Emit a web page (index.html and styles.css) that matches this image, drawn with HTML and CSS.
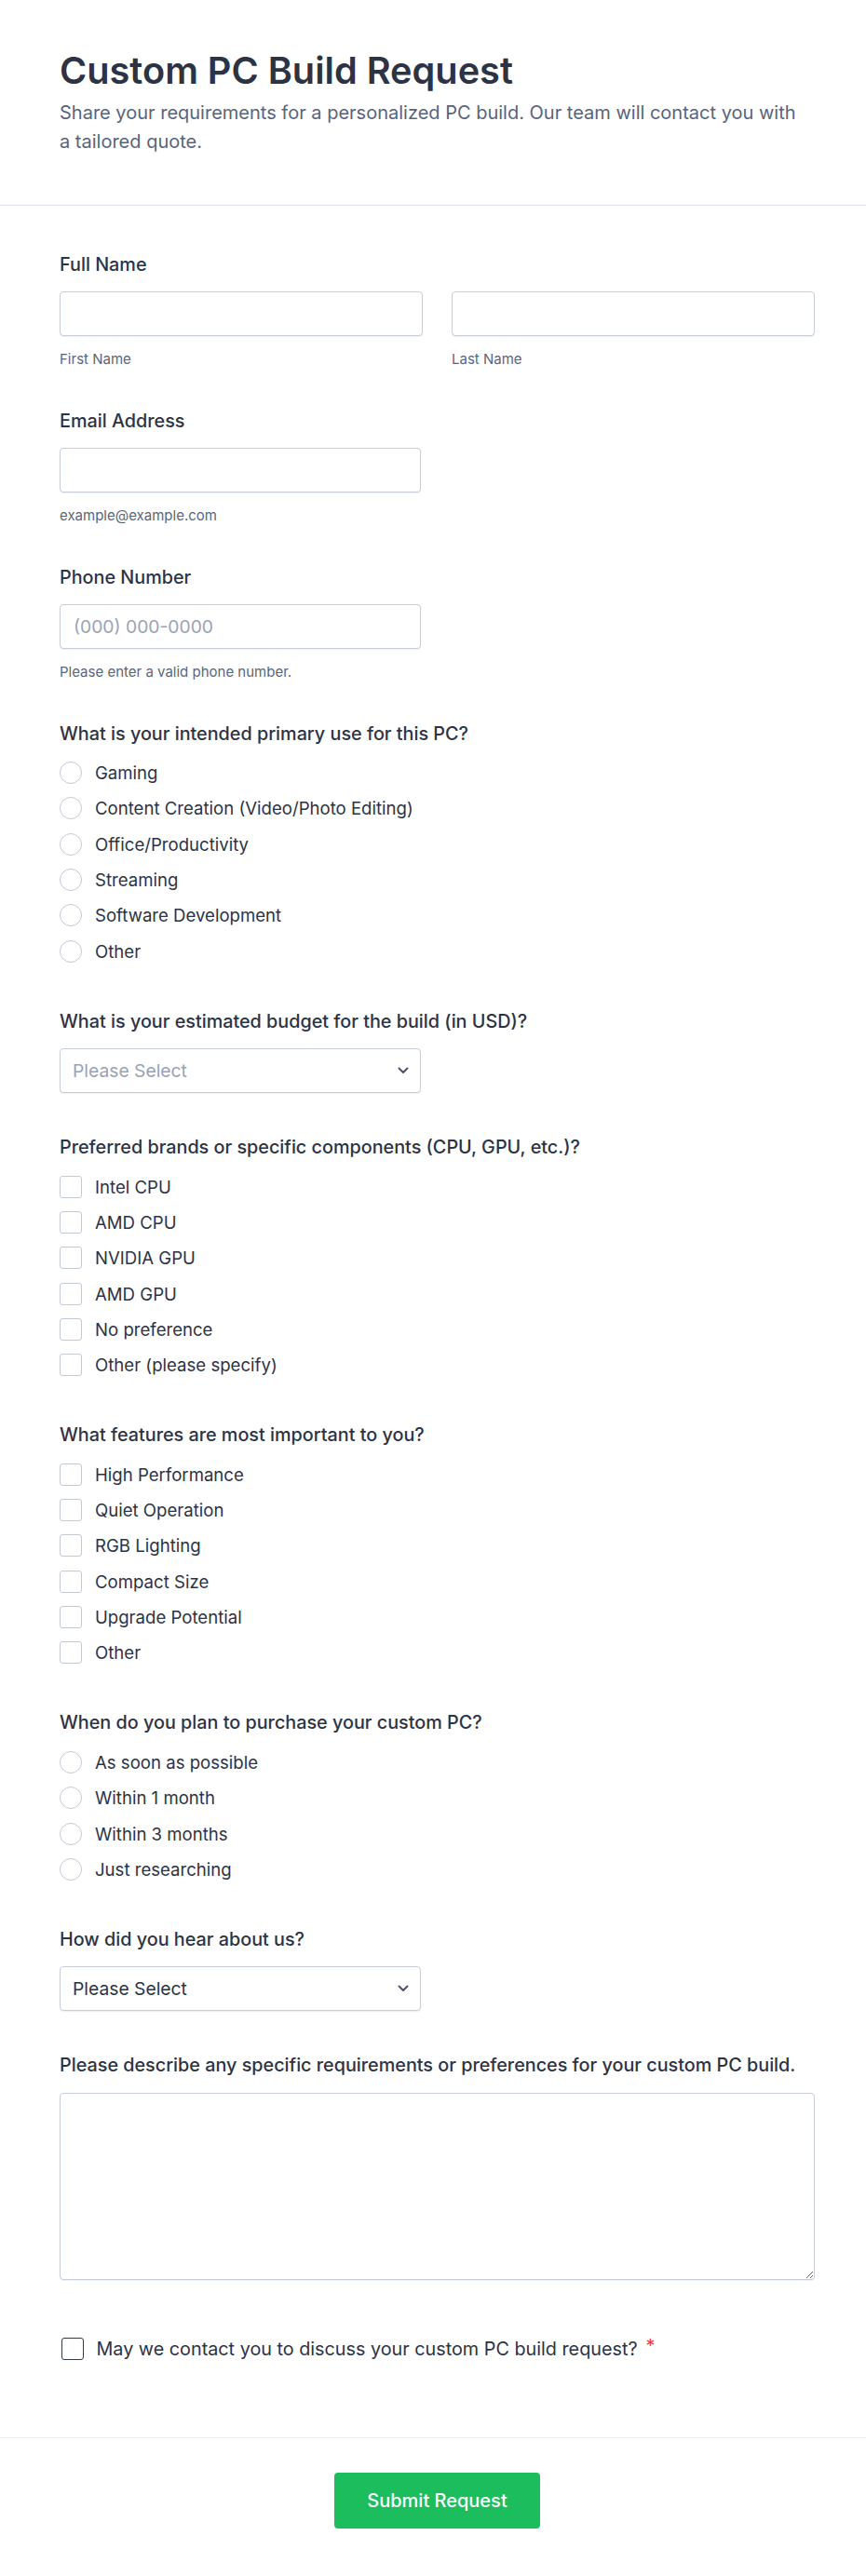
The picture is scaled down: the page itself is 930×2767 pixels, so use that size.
FILE: index.html
```html
<!DOCTYPE html>
<html lang="en">
<head>
<meta charset="utf-8">
<title>Custom PC Build Request</title>
<link rel="stylesheet" href="styles.css">
</head>
<body>
<header class="form-header">
  <h1 class="title">Custom PC Build Request</h1>
  <p class="subtitle">Share your requirements for a personalized PC build. Our team will contact you with a tailored quote.</p>
</header>

<main class="form-body">
  <div class="field">
    <div class="label">Full Name</div>
    <div class="name-row">
      <div class="name-col">
        <input class="text-input" type="text">
        <div class="helper">First Name</div>
      </div>
      <div class="name-col">
        <input class="text-input" type="text">
        <div class="helper">Last Name</div>
      </div>
    </div>
  </div>

  <div class="field">
    <div class="label">Email Address</div>
    <input class="text-input single" type="email">
    <div class="helper">example@example.com</div>
  </div>

  <div class="field">
    <div class="label">Phone Number</div>
    <input class="text-input single" type="tel" placeholder="(000) 000-0000">
    <div class="helper">Please enter a valid phone number.</div>
  </div>

  <div class="field">
    <div class="label">What is your intended primary use for this PC?</div>
    <div class="options">
      <label class="option"><input class="radio" type="radio" name="use"><span>Gaming</span></label>
      <label class="option"><input class="radio" type="radio" name="use"><span>Content Creation (Video/Photo Editing)</span></label>
      <label class="option"><input class="radio" type="radio" name="use"><span>Office/Productivity</span></label>
      <label class="option"><input class="radio" type="radio" name="use"><span>Streaming</span></label>
      <label class="option"><input class="radio" type="radio" name="use"><span>Software Development</span></label>
      <label class="option"><input class="radio" type="radio" name="use"><span>Other</span></label>
    </div>
  </div>

  <div class="field field-select">
    <div class="label">What is your estimated budget for the build (in USD)?</div>
    <div class="select-wrap">
      <select class="select placeholder">
        <option>Please Select</option>
      </select>
      <svg class="chevron" width="12" height="8" viewBox="0 0 12 8"><path d="M1.5 1.5l4.5 4.5 4.5-4.5" fill="none" stroke="#4b5566" stroke-width="2" stroke-linecap="round" stroke-linejoin="round"/></svg>
    </div>
  </div>

  <div class="field">
    <div class="label">Preferred brands or specific components (CPU, GPU, etc.)?</div>
    <div class="options">
      <label class="option"><input class="check" type="checkbox"><span>Intel CPU</span></label>
      <label class="option"><input class="check" type="checkbox"><span>AMD CPU</span></label>
      <label class="option"><input class="check" type="checkbox"><span>NVIDIA GPU</span></label>
      <label class="option"><input class="check" type="checkbox"><span>AMD GPU</span></label>
      <label class="option"><input class="check" type="checkbox"><span>No preference</span></label>
      <label class="option"><input class="check" type="checkbox"><span>Other (please specify)</span></label>
    </div>
  </div>

  <div class="field">
    <div class="label">What features are most important to you?</div>
    <div class="options">
      <label class="option"><input class="check" type="checkbox"><span>High Performance</span></label>
      <label class="option"><input class="check" type="checkbox"><span>Quiet Operation</span></label>
      <label class="option"><input class="check" type="checkbox"><span>RGB Lighting</span></label>
      <label class="option"><input class="check" type="checkbox"><span>Compact Size</span></label>
      <label class="option"><input class="check" type="checkbox"><span>Upgrade Potential</span></label>
      <label class="option"><input class="check" type="checkbox"><span>Other</span></label>
    </div>
  </div>

  <div class="field">
    <div class="label">When do you plan to purchase your custom PC?</div>
    <div class="options">
      <label class="option"><input class="radio" type="radio" name="when"><span>As soon as possible</span></label>
      <label class="option"><input class="radio" type="radio" name="when"><span>Within 1 month</span></label>
      <label class="option"><input class="radio" type="radio" name="when"><span>Within 3 months</span></label>
      <label class="option"><input class="radio" type="radio" name="when"><span>Just researching</span></label>
    </div>
  </div>

  <div class="field field-select">
    <div class="label">How did you hear about us?</div>
    <div class="select-wrap">
      <select class="select">
        <option>Please Select</option>
      </select>
      <svg class="chevron" width="12" height="8" viewBox="0 0 12 8"><path d="M1.5 1.5l4.5 4.5 4.5-4.5" fill="none" stroke="#4b5566" stroke-width="2" stroke-linecap="round" stroke-linejoin="round"/></svg>
    </div>
  </div>

  <div class="field field-textarea">
    <div class="label">Please describe any specific requirements or preferences for your custom PC build.</div>
    <textarea class="textarea"></textarea>
  </div>

  <div class="field field-last">
    <label class="consent">
      <input class="consent-box" type="checkbox">
      <span>May we contact you to discuss your custom PC build request?<span class="req">*</span></span>
    </label>
  </div>
</main>

<footer class="form-footer">
  <button class="submit" type="button">Submit Request</button>
</footer>
</body>
</html>
```

FILE: styles.css
```css
html, body {
  margin: 0;
  padding: 0;
  background: #ffffff;
}

body {
  font-family: Inter, "Noto Sans", "Liberation Sans", sans-serif;
  color: #2c3345;
}

.form-header {
  padding: 52px 64px 52px 64px;
  border-bottom: 1px solid #dfe1ea;
}

.title {
  margin: 0;
  font-size: 39.7px;
  line-height: 48px;
  font-weight: 600;
  color: #2c3345;
}

.subtitle {
  margin: 6px 0 0;
  max-width: 800px;
  font-size: 20px;
  line-height: 31px;
  color: #57647e;
}

.form-body {
  padding: 49.5px 55px 81.5px 64px;
}

.field {
  margin-bottom: 44px;
}

.field-select {
  margin-bottom: 45px;
}

.field-textarea {
  margin-bottom: 61px;
}

.field-last {
  margin-bottom: 0;
}

.label {
  font-size: 19.8px;
  line-height: 27px;
  font-weight: 500;
  margin-bottom: 15.5px;
  color: #2c3345;
}

.name-row {
  display: flex;
  gap: 31px;
}

.name-col {
  flex: 1;
}

.text-input,
.select,
.textarea {
  display: block;
  box-sizing: border-box;
  width: 100%;
  height: 48px;
  margin: 0;
  padding: 0 14px;
  border: 1px solid #c6ccd8;
  border-radius: 4px;
  background: #ffffff;
  box-shadow: 0 1px 1px rgba(60, 70, 100, 0.08);
  font-family: inherit;
  font-size: 19.3px;
  color: #2c3345;
  outline: none;
}

.text-input::placeholder {
  color: #9aa3b4;
}

.single,
.select-wrap {
  width: 388px;
}

.helper {
  margin-top: 15.5px;
  font-size: 15px;
  line-height: 18px;
  color: #5b6579;
}

.options {
  display: flex;
  flex-direction: column;
  gap: 14.33px;
  padding-top: 1px;
  padding-bottom: 6px;
}

.option {
  display: flex;
  align-items: center;
  gap: 14px;
  height: 24px;
  font-size: 18.6px;
  line-height: 24px;
  color: #2c3345;
}

.radio,
.check {
  appearance: none;
  -webkit-appearance: none;
  flex: none;
  width: 24px;
  height: 24px;
  margin: 0;
  border: 1px solid #c3c9d6;
  background: #ffffff;
  box-sizing: border-box;
}

.radio {
  border-radius: 50%;
}

.check {
  border-radius: 3px;
}

.select-wrap {
  position: relative;
}

.select {
  appearance: none;
  -webkit-appearance: none;
  padding: 0 40px 0 13px;
}

.select.placeholder {
  color: #98a2b5;
}

.chevron {
  position: absolute;
  right: 13px;
  top: 20px;
  pointer-events: none;
}

.textarea {
  height: 201px;
  padding: 12px 14px;
  resize: vertical;
}

.consent {
  display: flex;
  align-items: center;
  gap: 13.5px;
  height: 27px;
  font-size: 19.8px;
  line-height: 27px;
  color: #2c3345;
}

.consent-box {
  appearance: none;
  -webkit-appearance: none;
  flex: none;
  width: 24px;
  height: 24px;
  margin: 0 0 0 2px;
  border: 1.5px solid #343a46;
  border-radius: 3px;
  background: #ffffff;
  box-sizing: border-box;
}

.req {
  color: #f23a3c;
  margin-left: 9px;
  line-height: 0;
  vertical-align: 3px;
}

.form-footer {
  border-top: 1px solid #eceef2;
  padding: 37px 55px 50px 64px;
  display: flex;
  justify-content: center;
}

.submit {
  width: 221px;
  height: 60px;
  border: none;
  border-radius: 4px;
  background: #1bbd5c;
  color: #ffffff;
  font-family: inherit;
  font-size: 20px;
  font-weight: 500;
  cursor: pointer;
}
```
